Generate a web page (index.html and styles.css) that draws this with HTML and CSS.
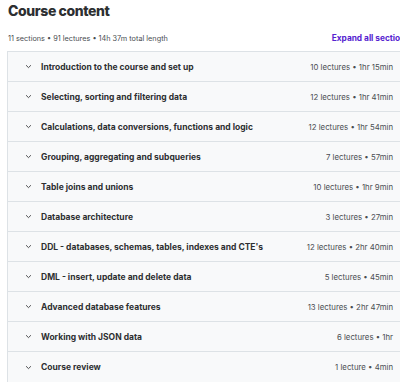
FILE: index.html
```html
<!DOCTYPE html>
<html lang="en">
<head>
    <meta charset="UTF-8">
    <title>Course content</title>
    <link rel="stylesheet" href="styles.css">
</head>
<body>
    <div class="curriculum">
        <h2>Course content</h2>
        <div class="curriculum-meta">
            <span>11 sections • 91 lectures • 14h 37m total length</span>
            <button class="expand-all">Expand all sections</button>
        </div>

        <div class="sections">
            <div class="section">
                <span class="chevron"><svg viewBox="0 0 10 6"><path d="M1.5 1.2 5 4.6 8.5 1.2"/></svg></span>
                <span class="section-title">Introduction to the course and set up</span>
                <span class="section-info">10 lectures • 1hr 15min</span>
            </div>
            <div class="section">
                <span class="chevron"><svg viewBox="0 0 10 6"><path d="M1.5 1.2 5 4.6 8.5 1.2"/></svg></span>
                <span class="section-title">Selecting, sorting and filtering data</span>
                <span class="section-info">12 lectures • 1hr 41min</span>
            </div>
            <div class="section">
                <span class="chevron"><svg viewBox="0 0 10 6"><path d="M1.5 1.2 5 4.6 8.5 1.2"/></svg></span>
                <span class="section-title">Calculations, data conversions, functions and logic</span>
                <span class="section-info">12 lectures • 1hr 54min</span>
            </div>
            <div class="section">
                <span class="chevron"><svg viewBox="0 0 10 6"><path d="M1.5 1.2 5 4.6 8.5 1.2"/></svg></span>
                <span class="section-title">Grouping, aggregating and subqueries</span>
                <span class="section-info">7 lectures • 57min</span>
            </div>
            <div class="section">
                <span class="chevron"><svg viewBox="0 0 10 6"><path d="M1.5 1.2 5 4.6 8.5 1.2"/></svg></span>
                <span class="section-title">Table joins and unions</span>
                <span class="section-info">10 lectures • 1hr 9min</span>
            </div>
            <div class="section">
                <span class="chevron"><svg viewBox="0 0 10 6"><path d="M1.5 1.2 5 4.6 8.5 1.2"/></svg></span>
                <span class="section-title">Database architecture</span>
                <span class="section-info">3 lectures • 27min</span>
            </div>
            <div class="section">
                <span class="chevron"><svg viewBox="0 0 10 6"><path d="M1.5 1.2 5 4.6 8.5 1.2"/></svg></span>
                <span class="section-title">DDL - databases, schemas, tables, indexes and CTE's</span>
                <span class="section-info">12 lectures • 2hr 40min</span>
            </div>
            <div class="section">
                <span class="chevron"><svg viewBox="0 0 10 6"><path d="M1.5 1.2 5 4.6 8.5 1.2"/></svg></span>
                <span class="section-title">DML - insert, update and delete data</span>
                <span class="section-info">5 lectures • 45min</span>
            </div>
            <div class="section">
                <span class="chevron"><svg viewBox="0 0 10 6"><path d="M1.5 1.2 5 4.6 8.5 1.2"/></svg></span>
                <span class="section-title">Advanced database features</span>
                <span class="section-info">13 lectures • 2hr 47min</span>
            </div>
            <div class="section">
                <span class="chevron"><svg viewBox="0 0 10 6"><path d="M1.5 1.2 5 4.6 8.5 1.2"/></svg></span>
                <span class="section-title">Working with JSON data</span>
                <span class="section-info">6 lectures • 1hr</span>
            </div>
            <div class="section">
                <span class="chevron"><svg viewBox="0 0 10 6"><path d="M1.5 1.2 5 4.6 8.5 1.2"/></svg></span>
                <span class="section-title">Course review</span>
                <span class="section-info">1 lecture • 4min</span>
            </div>
        </div>
    </div>
</body>
</html>
```

FILE: styles.css
```css
:root {
    --text: #2d2f31;
    --muted: #4a4e52;
    --border: #dde2e6;
    --row-bg: #f8f9fa;
    --purple: #5624d0;
}

* {
    margin: 0;
    padding: 0;
    box-sizing: border-box;
}

body {
    font-family: Inter, "Noto Sans", sans-serif;
    color: var(--text);
    background: #fff;
    overflow: hidden;
}

.curriculum {
    width: 414px;
    padding: 0 0 0 7px;
}

h2 {
    font-size: 14px;
    font-weight: 800;
    line-height: 22px;
    padding: 0 0 0 1px;
    letter-spacing: -0.4px;
}

.curriculum-meta {
    display: flex;
    justify-content: space-between;
    align-items: center;
    height: 29px;
    padding: 3px 0 0 1px;
    font-size: 7.3px;
    color: var(--muted);
}

.expand-all {
    background: none;
    border: none;
    font: inherit;
    font-size: 8.3px;
    font-weight: 700;
    color: var(--purple);
    cursor: pointer;
    margin-right: 4px;
}

.sections {
    border: 1px solid var(--border);
    border-right: none;
}

.section {
    display: flex;
    align-items: center;
    height: 30px;
    padding: 0 21px 0 17px;
    background: var(--row-bg);
    border-bottom: 1px solid var(--border);
}

.section:last-child {
    border-bottom: none;
}

.chevron {
    width: 8px;
    display: flex;
    margin-right: 8px;
}

.chevron svg {
    width: 7px;
    height: 5px;
    fill: none;
    stroke: var(--text);
    stroke-width: 1.2;
}

.section-title {
    flex: 1;
    font-size: 8.5px;
    font-weight: 700;
}

.section-info {
    font-size: 7.8px;
    color: var(--muted);
}
```
